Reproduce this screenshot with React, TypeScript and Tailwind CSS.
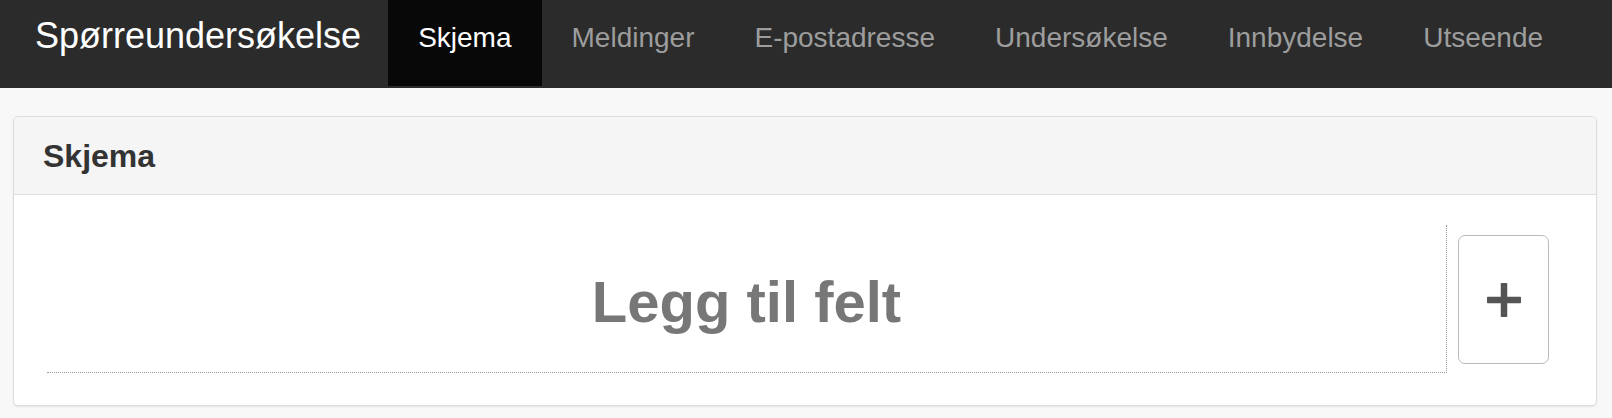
import React from "react";

const tabs = ["Skjema", "Meldinger", "E-postadresse", "Undersøkelse", "Innbydelse", "Utseende"];

export default function App() {
  return (
    <div className="min-h-[418px] bg-[#f8f8f8] font-['Liberation_Sans',Arial,Helvetica,sans-serif]">
      <nav className="flex h-[88px] items-start bg-[#2b2b2b]">
        <div className="pl-[35px] pr-[27px] pt-[18px] text-[36px] leading-[36px] text-white whitespace-nowrap">
          Spørreundersøkelse
        </div>
        <ul className="flex">
          {tabs.map((t, i) => (
            <li
              key={t}
              className={
                i === 0
                  ? "h-[86px] bg-[#080808] px-[30px] pt-[24px] text-[28px] leading-[28px] text-white whitespace-nowrap"
                  : "h-[86px] px-[30px] pt-[24px] text-[28px] leading-[28px] text-[#9d9d9d] whitespace-nowrap"
              }
            >
              {t}
            </li>
          ))}
        </ul>
      </nav>

      <main className="ml-[13px] mr-[15px] pt-[28px]">
        <section className="overflow-hidden rounded-[5px] border border-[#dddddd] bg-white shadow-[0_1px_2px_rgba(0,0,0,0.08)]">
          <header className="flex h-[78px] items-center border-b border-[#dddddd] bg-[#f5f5f5] px-[29px]">
            <h2 className="text-[32px] font-bold leading-[32px] text-[#333333]">Skjema</h2>
          </header>
          <div className="flex items-start gap-[11px] pb-[32px] pl-[33px] pr-[47px] pt-[30px]">
            <div className="flex h-[148px] flex-1 items-center justify-center border-b border-r border-dotted border-[#999999] pt-[6px]">
              <span className="text-[58px] font-bold leading-[58px] text-[#777777]">Legg til felt</span>
            </div>
            <button
              type="button"
              className="mt-[10px] flex h-[129px] w-[91px] items-center justify-center rounded-[7px] border border-[#bbbbbb] bg-white"
            >
              <svg width="34" height="34" viewBox="0 0 34 34" aria-hidden="true">
                <rect x="13.75" y="0" width="6.5" height="34" rx="0.8" fill="#555555" />
                <rect x="0" y="13.75" width="34" height="6.5" rx="0.8" fill="#555555" />
              </svg>
            </button>
          </div>
        </section>
      </main>
    </div>
  );
}
